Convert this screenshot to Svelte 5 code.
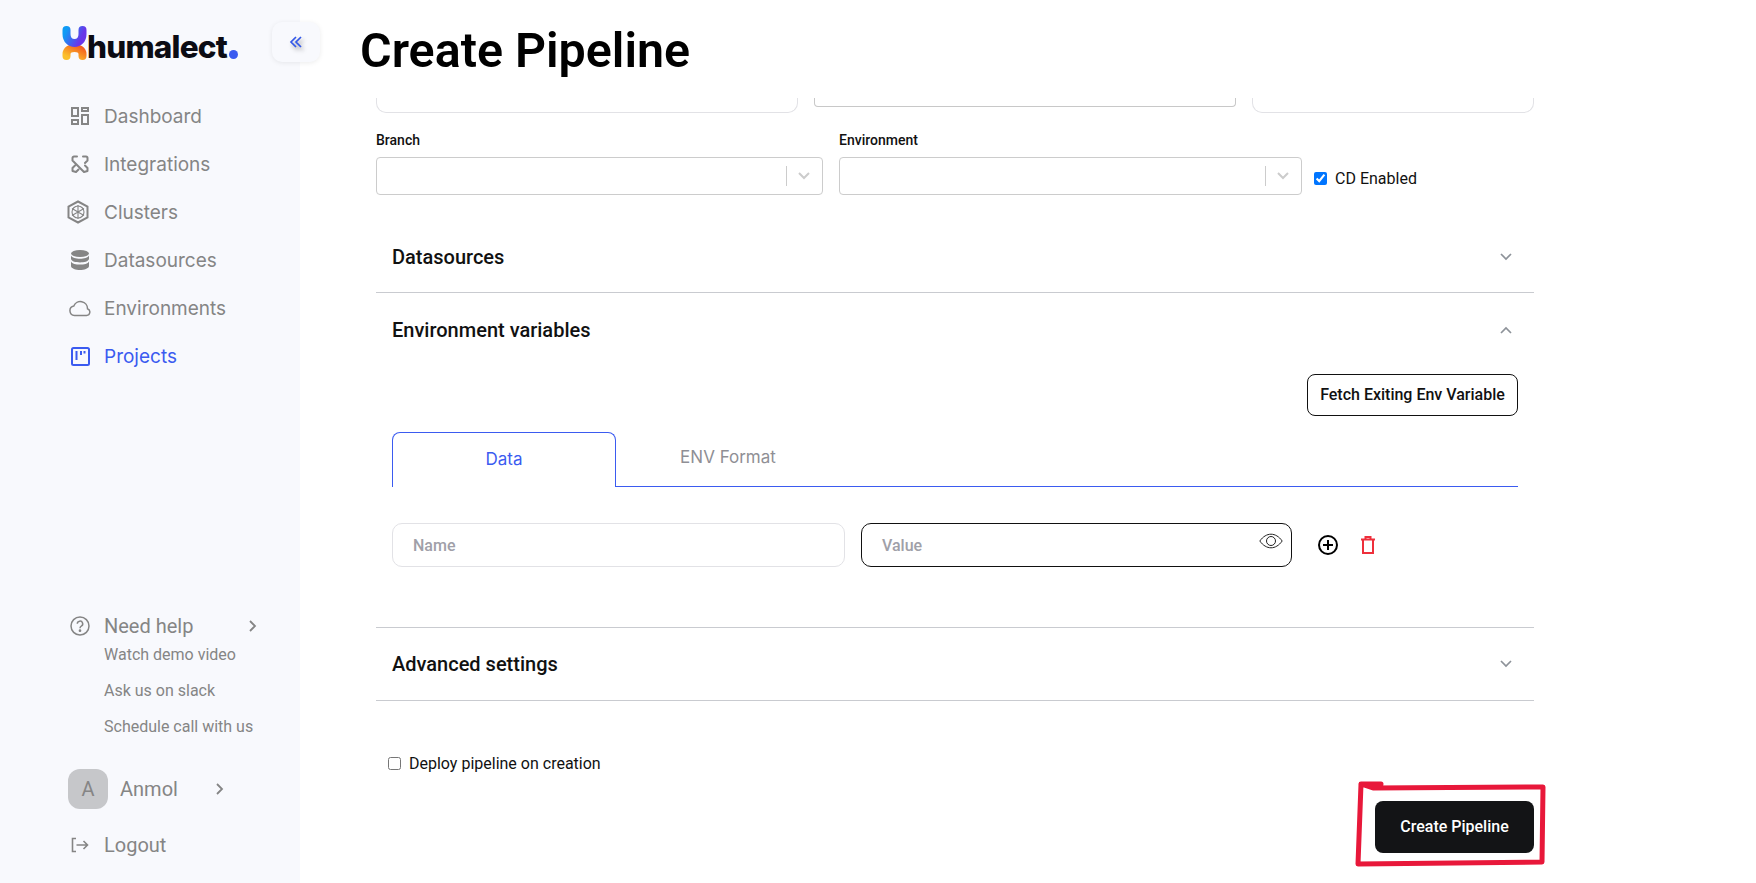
<script>
  const nav = [
    { label: 'Dashboard', icon: 'dash' },
    { label: 'Integrations', icon: 'int' },
    { label: 'Clusters', icon: 'clu' },
    { label: 'Datasources', icon: 'db' },
    { label: 'Environments', icon: 'env' },
    { label: 'Projects', icon: 'proj', active: true }
  ];
  const links = ['Watch demo video', 'Ask us on slack', 'Schedule call with us'];
</script>

<div class="app">
  <aside class="side">
    <div class="brand">
      <svg class="mark" viewBox="0 0 25 34" width="25" height="34">
        <defs>
          <linearGradient id="gt" x1="0" y1="0" x2="1" y2="0.4"><stop offset="0" stop-color="#0f9bf5"/><stop offset="1" stop-color="#6a35e8"/></linearGradient>
          <linearGradient id="gb" x1="0" y1="1" x2="1" y2="0"><stop offset="0" stop-color="#fbc02d"/><stop offset="1" stop-color="#f4601f"/></linearGradient>
        </defs>
        <path d="M4.5 30 V28 C4.5 20 20.500 20 20.500 28 V30" fill="none" stroke="url(#gb)" stroke-width="8" stroke-linecap="round"/>
        <path d="M4.5 4 V8 C4.5 20 20.500 20 20.500 8 V4" fill="none" stroke="url(#gt)" stroke-width="8" stroke-linecap="round"/>
      </svg>
      <span class="word">humalect</span><span class="dot"></span>
      <button class="collapse" aria-label="Collapse">
        <svg viewBox="0 0 14 14" width="14" height="14" fill="none" stroke="#3358e8" stroke-width="1.700"><path d="M7 2 2 7l5 5M12 2 7 7l5 5"/></svg>
      </button>
    </div>

    <nav class="nav">
      {#each nav as n}
        <div class="item" class:active={n.active}>
          <span class="ic" class:nudge={n.icon === 'clu'}>
            {#if n.icon === 'dash'}
              <svg viewBox="0 0 18 18" width="18" height="18" fill="none" stroke="#858585" stroke-width="2"><path d="M1 1h6v8H1zM11 1h6v3h-6zM11 8h6v9h-6zM1 13h6v4H1z"/></svg>
            {:else if n.icon === 'int'}
              <svg viewBox="0 0 18 18" width="18" height="18" fill="none" stroke="#858585" stroke-width="2" stroke-linecap="round" stroke-linejoin="round"><path d="M6 1.500H3A1.500 1.500 0 0 0 1.500 3v2.500L13 17l3.500-1V13L14 10.500M12 1.500h3A1.500 1.500 0 0 1 16.500 3v2.500L14 8M4 10.500 1.500 13v3L5 17l2.500-2.500"/></svg>
            {:else if n.icon === 'clu'}
              <svg viewBox="0 0 22 24" width="22" height="24" fill="none" stroke="#858585"><path d="M11 1.500 20.500 6.500v11L11 22.500 1.500 17.500v-11z" stroke-width="2"/><circle cx="11" cy="12" r="6" stroke-width="1.100"/><path d="M11 5v14M5 8.500l12 7M17 8.500l-12 7" stroke-width="1.100"/></svg>
            {:else if n.icon === 'db'}
              <svg viewBox="0 0 18 20" width="18" height="20" fill="#858585"><ellipse cx="9" cy="3.500" rx="9" ry="3.500"/><path d="M0 5.500c1 2.500 5 3.200 9 3.200s8-.7 9-3.200V9c-.5 2.500-5 3.400-9 3.400S.5 11.500 0 9zM0 11.500c1 2.500 5 3 9 3s8-.5 9-3V16c0 2.500-5 4-9 4s-9-1.500-9-4z"/></svg>
            {:else if n.icon === 'env'}
              <svg viewBox="0 0 22 17" width="22" height="17" fill="none" stroke="#858585" stroke-width="1.500"><path d="M5.500 15.500H17.500a3.500 3.500 0 0 0 1-6.800A7.100 7.100 0 0 0 4.800 6a4.800 4.800 0 0 0 .7 9.500z"/></svg>
            {:else if n.icon === 'proj'}
              <svg viewBox="0 0 19 19" width="19" height="19" fill="none" stroke="#3b5bf0" stroke-width="2"><rect x="1" y="1" width="17" height="17" rx="1.500"/><path d="M5.500 4v9M10 4v4M13.500 4v2.500" stroke-width="2"/></svg>
            {/if}
          </span>
          <span>{n.label}</span>
        </div>
      {/each}
    </nav>

    <div class="bottom">
      <div class="help">
        <span class="ic">
          <svg viewBox="0 0 20 20" width="20" height="20" fill="none" stroke="#858585" stroke-width="1.500"><circle cx="10" cy="10" r="9"/><path d="M7.300 7.800a2.700 2.700 0 1 1 4 2.400c-.9.500-1.300 1-1.300 2"/><circle cx="10" cy="14.700" r=".6" fill="#858585"/></svg>
        </span>
        <span class="help-t">Need help</span>
        <svg class="chev" viewBox="0 0 10 14" width="10" height="14" fill="none" stroke="#858585" stroke-width="1.800"><path d="m2 2 5 5-5 5"/></svg>
      </div>
      <div class="links">
        {#each links as l}<div class="link">{l}</div>{/each}
      </div>
      <div class="user">
        <span class="avatar">A</span>
        <span class="uname">Anmol</span>
        <svg viewBox="0 0 10 14" width="10" height="14" fill="none" stroke="#858585" stroke-width="1.800"><path d="m2 2 5 5-5 5"/></svg>
      </div>
      <div class="logout">
        <span class="ic">
          <svg viewBox="0 0 18 16" width="18" height="16" fill="none" stroke="#858585" stroke-width="1.600"><path d="M5 1.500H1.500v13H5M5.500 8h11M12.500 4l4 4-4 4"/></svg>
        </span>
        <span class="help-t">Logout</span>
      </div>
    </div>
  </aside>

  <main class="main">
    <header class="head"><h1>Create Pipeline</h1></header>

    <div class="scroll">
      <div class="cut">
        <div class="cutbox a"></div>
        <div class="cutbox b"></div>
        <div class="cutbox c"></div>
      </div>

      <div class="row">
        <div class="field f1">
          <div class="lab">Branch</div>
          <div class="select"><i></i><svg viewBox="0 0 14 10" width="14" height="10" fill="none" stroke="#cccccc" stroke-width="2"><path d="m2 2 5 5 5-5"/></svg></div>
        </div>
        <div class="field f2">
          <div class="lab">Environment</div>
          <div class="select"><i></i><svg viewBox="0 0 14 10" width="14" height="10" fill="none" stroke="#cccccc" stroke-width="2"><path d="m2 2 5 5 5-5"/></svg></div>
        </div>
        <label class="check cd"><input type="checkbox" checked /> <span>CD Enabled</span></label>
      </div>

      <section class="acc first">
        <div class="acc-h"><span>Datasources</span><svg viewBox="0 0 14 10" width="14" height="10" fill="none" stroke="#8d9299" stroke-width="1.700"><path d="m2 2 5 5 5-5"/></svg></div>
      </section>

      <section class="acc env">
        <div class="acc-h"><span>Environment variables</span><svg viewBox="0 0 14 10" width="14" height="10" fill="none" stroke="#8d9299" stroke-width="1.700"><path d="m2 8 5-5 5 5"/></svg></div>
        <div class="acc-b">
          <div class="fetch-row"><button class="fetch">Fetch Exiting Env Variable</button></div>
          <div class="tabs">
            <div class="tab on">Data</div>
            <div class="tab">ENV Format</div>
          </div>
          <div class="kv">
            <div class="inp name">Name</div>
            <div class="inp value">Value
              <svg class="eye" viewBox="0 0 24 16" width="24" height="16" fill="none" stroke="#222" stroke-width="1"><path d="M.8 8C4 3.500 8 1.200 12 1.200S20 3.500 23.200 8C20 12.500 16 14.800 12 14.800S4 12.500 .8 8z"/><circle cx="12" cy="8" r="4.500"/></svg>
            </div>
            <svg class="plus" viewBox="0 0 20 20" width="20" height="20" fill="none" stroke="#000" stroke-width="2"><circle cx="10" cy="10" r="9"/><path d="M10 5v10M5 10h10"/></svg>
            <svg class="trash" viewBox="0 0 14 18" width="14" height="18" fill="none" stroke="#ee2f3b" stroke-width="2"><path d="M0 3.500h14M4.500 3V1h5v2M2 4v13h10V4"/></svg>
          </div>
        </div>
      </section>

      <section class="acc adv">
        <div class="acc-h"><span>Advanced settings</span><svg viewBox="0 0 14 10" width="14" height="10" fill="none" stroke="#8d9299" stroke-width="1.700"><path d="m2 2 5 5 5-5"/></svg></div>
      </section>

      <label class="check deploy"><input type="checkbox" /> <span>Deploy pipeline on creation</span></label>

      <div class="actions"><button class="create">Create Pipeline</button></div>
    </div>
  </main>

  <svg class="mark-up" viewBox="0 0 196 90" width="196" height="90" fill="none" stroke="#e8183a" stroke-width="5" stroke-linejoin="round" stroke-linecap="round">
    <path d="M8 4 5 84 189 82 190 7 20 8 8 4 28 4"/>
  </svg>
</div>

<style>
  :global(body) { margin: 0; background: #fff; }
  .app { display: flex; width: 1756px; height: 883px; overflow: hidden; position: relative; font-family: Roboto, sans-serif; }
  .side { width: 300px; flex: none; background: #f8f9fd; display: flex; flex-direction: column; padding: 22px 0 0 0; box-sizing: border-box; }

  .brand { display: flex; align-items: flex-start; height: 70px; padding-left: 62px; position: relative; }
  .mark { margin-top: 4px; }
  .word { font: 800 31.5px/30px Inter, sans-serif; color: #0c0c14; letter-spacing: -0.8px; margin: 10px 0 0 0; }
  .dot { width: 9px; height: 9px; border-radius: 50%; background: #3b5bf0; margin: 28px 0 0 2px; }
  .collapse { position: absolute; left: 272px; top: 0; width: 48px; height: 40px; border: 0; border-radius: 10px; background: #f8f9fd; box-shadow: 0 1px 5px rgba(0,0,0,.08); display: flex; align-items: center; justify-content: center; padding: 0; }
  .collapse svg { filter: drop-shadow(2px 3px 2px rgba(0,0,0,.35)); }

  .nav { display: flex; flex-direction: column; }
  .item { height: 48px; display: flex; align-items: center; padding-left: 68px; font: 400 19px Inter, sans-serif; color: #858585; }
  .item.active { color: #3b5bf0; }
  .ic { width: 24px; margin-right: 12px; display: flex; justify-content: center; flex: none; }
  .ic.nudge { transform: translateX(-2px); }

  .bottom { margin-top: auto; padding-bottom: 24px; }
  .help { display: flex; align-items: center; padding-left: 68px; height: 28px; }
  .help-t { font-size: 20px; color: #858585; }
  .chev { margin-left: 55px; }
  .links { padding-left: 104px; margin-top: -3px; }
  .link { height: 36px; line-height: 36px; font-size: 16px; color: #858585; }
  .user { display: flex; align-items: center; padding-left: 68px; margin-top: 24px; height: 40px; }
  .avatar { width: 40px; height: 40px; border-radius: 12px; background: #c6c7ca; color: #858585; font-size: 20px; display: flex; align-items: center; justify-content: center; }
  .uname { font-size: 20px; color: #858585; margin: 0 43px 0 12px; width: 52px; }
  .logout { display: flex; align-items: center; padding-left: 68px; margin-top: 22px; height: 28px; }

  .main { flex: 1; min-width: 0; display: flex; flex-direction: column; }
  .head { height: 98px; flex: none; padding-left: 60px; }
  h1 { margin: 0; font-weight: 600; font-size: 48.4px; line-height: 102px; color: #000; height: 98px; }

  .scroll { flex: 1; overflow: hidden; padding-left: 76px; width: 1158px; }
  .cut { display: flex; height: 15px; gap: 16px; align-items: flex-start; }
  .cutbox { box-sizing: border-box; border: 1px solid #e2e2e6; border-top: 0; border-radius: 0 0 10px 10px; height: 15px; }
  .cutbox.a { width: 422px; }
  .cutbox.b { width: 422px; height: 9px; border-color: #c8c8c8; border-radius: 0 0 4px 4px; }
  .cutbox.c { width: 282px; }

  .row { display: flex; gap: 16px; margin-top: 17px; align-items: flex-end; }
  .lab { font-size: 14px; font-weight: 500; line-height: 20px; color: #111; margin-bottom: 7px; }
  .f1 { width: 447px; }
  .f2 { width: 463px; }
  .select { box-sizing: border-box; height: 38px; border: 1px solid #ccc; border-radius: 4px; display: flex; align-items: center; justify-content: flex-end; padding-right: 11px; }
  .select i { width: 1px; height: 20px; background: #ccc; margin-right: 10px; }
  .check { display: flex; align-items: center; gap: 7px; font-size: 16px; color: #111; }
  .check input { margin: 0; width: 13px; height: 13px; }
  .cd { height: 38px; margin-left: -4px; gap: 8px; padding-top: 4px; box-sizing: border-box; }

  .acc { border-bottom: 1px solid #c9cbd0; }
  .first { margin-top: 26px; height: 72px; box-sizing: border-box; }
  .acc-h { height: 72px; box-sizing: border-box; display: flex; align-items: center; justify-content: space-between; padding: 0 21px 0 16px; font-size: 20px; font-weight: 500; color: #111; }
  .first .acc-h { height: 72px; }
  .env .acc-h { height: 72px; padding-top: 2px; }
  .adv { height: 73px; box-sizing: border-box; }

  .acc-b { padding: 0 16px; }
  .fetch-row { display: flex; justify-content: flex-end; margin-top: 9px; }
  .fetch { box-sizing: border-box; width: 211px; height: 42px; border: 1px solid #111; border-radius: 8px; background: #fff; font: 500 16px Roboto, sans-serif; color: #111; padding: 0 0 2px; }
  .tabs { display: flex; margin-top: 16px; height: 55px; box-sizing: border-box; border-bottom: 1px solid #3b5bf0; }
  .tab { width: 224px; height: 55px; box-sizing: border-box; display: flex; align-items: center; justify-content: center; font: 400 17px Inter, sans-serif; color: #8f8f95; padding-bottom: 6px; }
  .tab.on { color: #3b5bf0; border: 1px solid #3b5bf0; border-bottom: 0; border-radius: 8px 8px 0 0; background: #fff; padding-bottom: 3px; padding-top: 0; }

  .kv { display: flex; align-items: center; margin-top: 36px; height: 44px; }
  .inp { box-sizing: border-box; height: 44px; border-radius: 10px; display: flex; align-items: center; padding-left: 20px; font-size: 16px; font-weight: 500; color: #a0a0a8; position: relative; }
  .name { width: 453px; border: 1px solid #e2e2e6; }
  .value { width: 431px; margin-left: 16px; border: 1px solid #111; }
  .eye { position: absolute; right: 8px; top: 9px; }
  .plus { margin-left: 26px; }
  .trash { margin-left: 23px; }
  .acc-b { padding-bottom: 60px; }

  .deploy { margin: 52px 0 0 12px; height: 20px; gap: 8px; }
  .actions { display: flex; justify-content: flex-end; margin-top: 28px; }
  .create { width: 159px; height: 52px; border: 0; border-radius: 8px; background: #131416; color: #fff; font: 500 16px Roboto, sans-serif; padding: 0 0 2px; }

  .mark-up { position: absolute; left: 1353px; top: 780px; }
</style>
